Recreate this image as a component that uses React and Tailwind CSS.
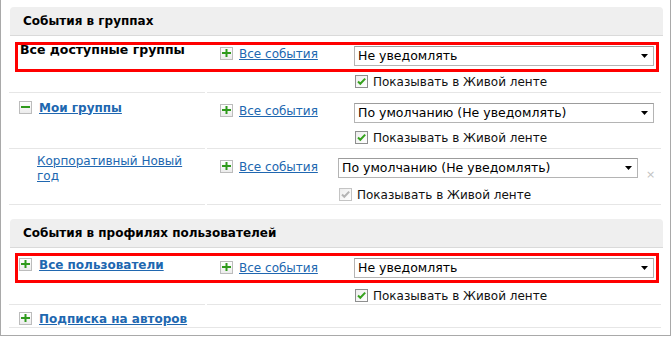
function PlusBox({ minus }) {
  return (
    <span className="inline-flex w-[13px] h-[13px] shrink-0 border border-[#bcbcbc] bg-gradient-to-b from-white to-[#ececec]">
      <svg width="11" height="11" viewBox="0 0 11 11">
        <rect x="1" y="4" width="9" height="2" fill="#2f9a1c" />
        {!minus && <rect x="4.5" y="1" width="2" height="8" fill="#2f9a1c" />}
      </svg>
    </span>
  );
}

function Check({ disabled }) {
  return (
    <span
      className={
        "inline-flex w-[13px] h-[13px] shrink-0 border bg-gradient-to-br from-[#ededed] to-white " +
        (disabled ? "border-[#c4c4c4]" : "border-[#8e8f8f]")
      }
    >
      <svg width="11" height="11" viewBox="0 0 11 11">
        <path
          d="M2 5.5 L4.3 7.8 L9.2 2.6"
          stroke={disabled ? "#b4b4b4" : "#36a21e"}
          strokeWidth="2"
          fill="none"
        />
      </svg>
    </span>
  );
}

function Select({ text }) {
  return (
    <div className="flex items-center justify-between w-[300px] h-[20px] border border-[#b4b4b4] border-t-[#9c9c9c] bg-white pl-[3px] pr-[5px] text-[12.5px] text-black">
      <span>{text}</span>
      <svg width="7" height="4" viewBox="0 0 7 4">
        <polygon points="0,0 7,0 3.5,4" fill="#000" />
      </svg>
    </div>
  );
}

function Link({ bold, children }) {
  return (
    <span className={"text-[#2067b0] underline " + (bold ? "font-bold" : "")}>
      {children}
    </span>
  );
}

function AllEvents({ top = "pt-[11px]", w = "w-[147px]" }) {
  return (
    <div className={w + " pl-[13px] " + top}>
      <div className="flex items-center gap-[6px] h-[13px]">
        <PlusBox />
        <Link>Все события</Link>
      </div>
    </div>
  );
}

function Live({ disabled, mt = "mt-[9px]" }) {
  return (
    <div className={"flex items-center gap-[5px] ml-px h-[13px] " + mt}>
      <Check disabled={disabled} />
      <span className="text-[#111]">Показывать в Живой ленте</span>
    </div>
  );
}

function Header({ title, className = "" }) {
  return (
    <div
      className={
        "ml-px h-[29px] bg-[#efefef] rounded-t-[4px] border-b border-[#dadada] flex items-center pl-[13px] font-bold text-black " +
        className
      }
    >
      {title}
    </div>
  );
}

function Row({ h, left, right }) {
  return (
    <div className={"flex gap-[2px] " + h}>
      <div className="w-[196px] border-b border-[#e6e6e6]">{left}</div>
      <div className="w-[454px] border-b border-[#e6e6e6] flex">{right}</div>
    </div>
  );
}

export default function App() {
  return (
    <div className="w-[672px] h-[337px] bg-white font-['DejaVu_Sans',Verdana,sans-serif] text-[12px] leading-[16px]">
      <div className="relative w-[671px] h-[336px] border-x border-b border-[#a9a9a9] pl-[8px] pr-[7px] pt-[7px]">
        {/* Events in groups */}
        <Header title="События в группах" />

        <Row
          h="h-[57px]"
          left={
            <div className="pl-[11px] pt-[6px] font-bold text-[12.5px] text-black">
              Все доступные группы
            </div>
          }
          right={
            <>
              <AllEvents />
              <div className="pt-[10px]">
                <Select text="Не уведомлять" />
                <Live />
              </div>
            </>
          }
        />

        <Row
          h="h-[56px]"
          left={
            <div className="pl-[10px] pt-[8px] flex items-center gap-[7px] h-[21px]">
              <PlusBox minus />
              <Link bold>Мои группы</Link>
            </div>
          }
          right={
            <>
              <AllEvents />
              <div className="pt-[10px]">
                <Select text="По умолчанию (Не уведомлять)" />
                <Live mt="mt-[8px]" />
              </div>
            </>
          }
        />

        <Row
          h="h-[56px]"
          left={
            <div className="pl-[28px] pt-[5px] leading-[15px]">
              <Link>Корпоративный Новый год</Link>
            </div>
          }
          right={
            <>
              <AllEvents w="w-[131px]" />
              <div className="pt-[9px]">
                <div className="flex">
                  <Select text="По умолчанию (Не уведомлять)" />
                  <span className="ml-[8px] mt-[11px] text-[11px] leading-[11px] text-[#c2c2c2]">
                    ×
                  </span>
                </div>
                <Live disabled mt="mt-[8px]" />
              </div>
            </>
          }
        />

        {/* Events in user profiles */}
        <Header title="События в профилях пользователей" className="mt-[14px]" />

        <Row
          h="h-[57px]"
          left={
            <div className="pl-[10px] pt-[10px] flex items-center gap-[7px] h-[23px]">
              <PlusBox />
              <Link bold>Все пользователи</Link>
            </div>
          }
          right={
            <>
              <AllEvents top="pt-[13px]" />
              <div className="pt-[10px]">
                <Select text="Не уведомлять" />
                <Live mt="mt-[11px]" />
              </div>
            </>
          }
        />

        <div className="h-[23px] border-b border-[#e6e6e6] w-[652px]">
          <div className="pl-[10px] pt-[7px] flex items-center gap-[7px] h-[20px]">
            <PlusBox />
            <Link bold>Подписка на авторов</Link>
          </div>
        </div>

        {/* highlight frames */}
        <div className="absolute left-[14px] top-[42px] w-[644px] h-[30px] border-[3px] border-[#f00]" />
        <div className="absolute left-[14px] top-[253px] w-[644px] h-[30px] border-[3px] border-[#f00]" />
      </div>
    </div>
  );
}
